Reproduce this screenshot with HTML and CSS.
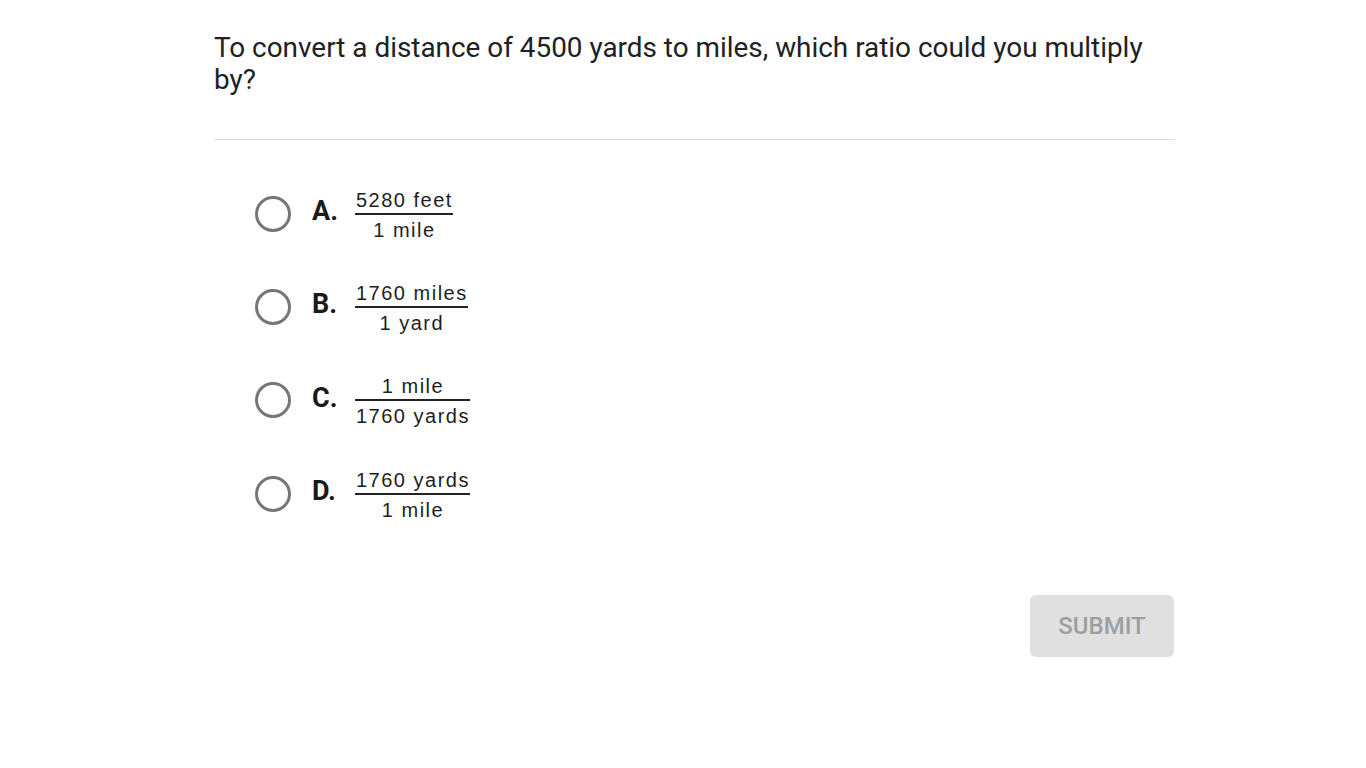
FILE: index.html
```html
<!DOCTYPE html>
<html lang="en">
<head>
<meta charset="utf-8">
<title>Question</title>
<link rel="stylesheet" href="styles.css">
</head>
<body>
<main class="quiz">
  <p class="question">To convert a distance of 4500 yards to miles, which ratio could you multiply by?</p>
  <hr class="divider">
  <ul class="options">
    <li class="option">
      <span class="radio"></span>
      <span class="letter">A.</span>
      <span class="frac"><span class="num">5280 feet</span><span class="bar"></span><span class="den">1 mile</span></span>
    </li>
    <li class="option">
      <span class="radio"></span>
      <span class="letter">B.</span>
      <span class="frac"><span class="num">1760 miles</span><span class="bar"></span><span class="den">1 yard</span></span>
    </li>
    <li class="option">
      <span class="radio"></span>
      <span class="letter">C.</span>
      <span class="frac"><span class="num">1 mile</span><span class="bar"></span><span class="den">1760 yards</span></span>
    </li>
    <li class="option">
      <span class="radio"></span>
      <span class="letter">D.</span>
      <span class="frac"><span class="num">1760 yards</span><span class="bar"></span><span class="den">1 mile</span></span>
    </li>
  </ul>
  <div class="actions">
    <button class="submit" type="button">SUBMIT</button>
  </div>
</main>
</body>
</html>
```

FILE: styles.css
```css
html, body {
  margin: 0;
  padding: 0;
  background: #ffffff;
}

body {
  font-family: Roboto, "Liberation Sans", Arial, sans-serif;
  color: #212121;
}

.quiz {
  width: 961px;
  margin-left: 214px;
  padding-top: 32px;
}

.question {
  margin: 0;
  font-size: 27.9px;
  line-height: 32px;
  color: #212121;
}

.divider {
  margin: 43px 0 0 0;
  border: 0;
  height: 1px;
  background: #dadada;
}

.options {
  list-style: none;
  margin: 0;
  padding: 27px 0 0 0;
}

.option {
  height: 93.33px;
  display: flex;
  align-items: center;
}

.radio {
  box-sizing: border-box;
  width: 36px;
  height: 36px;
  border: 3px solid #767676;
  border-radius: 50%;
  margin-left: 41px;
  flex: none;
}

.letter {
  width: 43px;
  margin-left: 21px;
  font-size: 27px;
  font-weight: 700;
  color: #1a1a1a;
  margin-top: -5px;
  flex: none;
}

.frac {
  display: inline-flex;
  flex-direction: column;
  align-items: stretch;
  font-family: "Liberation Sans", Arial, sans-serif;
  font-size: 20px;
  letter-spacing: 1.5px;
  color: #1e1e1e;
  text-align: center;
  margin-top: 2px;
}

.num, .den {
  display: block;
  line-height: 24px;
  padding: 0 0 0 1px;
  white-space: nowrap;
}

.bar {
  display: block;
  height: 2px;
  background: #222222;
  margin: 1px 0 3px 0;
}

.actions {
  display: flex;
  justify-content: flex-end;
  margin-top: 55px;
}

.submit {
  width: 144px;
  height: 62px;
  margin-right: 1px;
  border: 0;
  border-radius: 6px;
  background: #e0e0e0;
  color: #9e9e9e;
  font-family: Roboto, "Liberation Sans", Arial, sans-serif;
  font-size: 24px;
  font-weight: 500;
  padding: 0;
}
```
